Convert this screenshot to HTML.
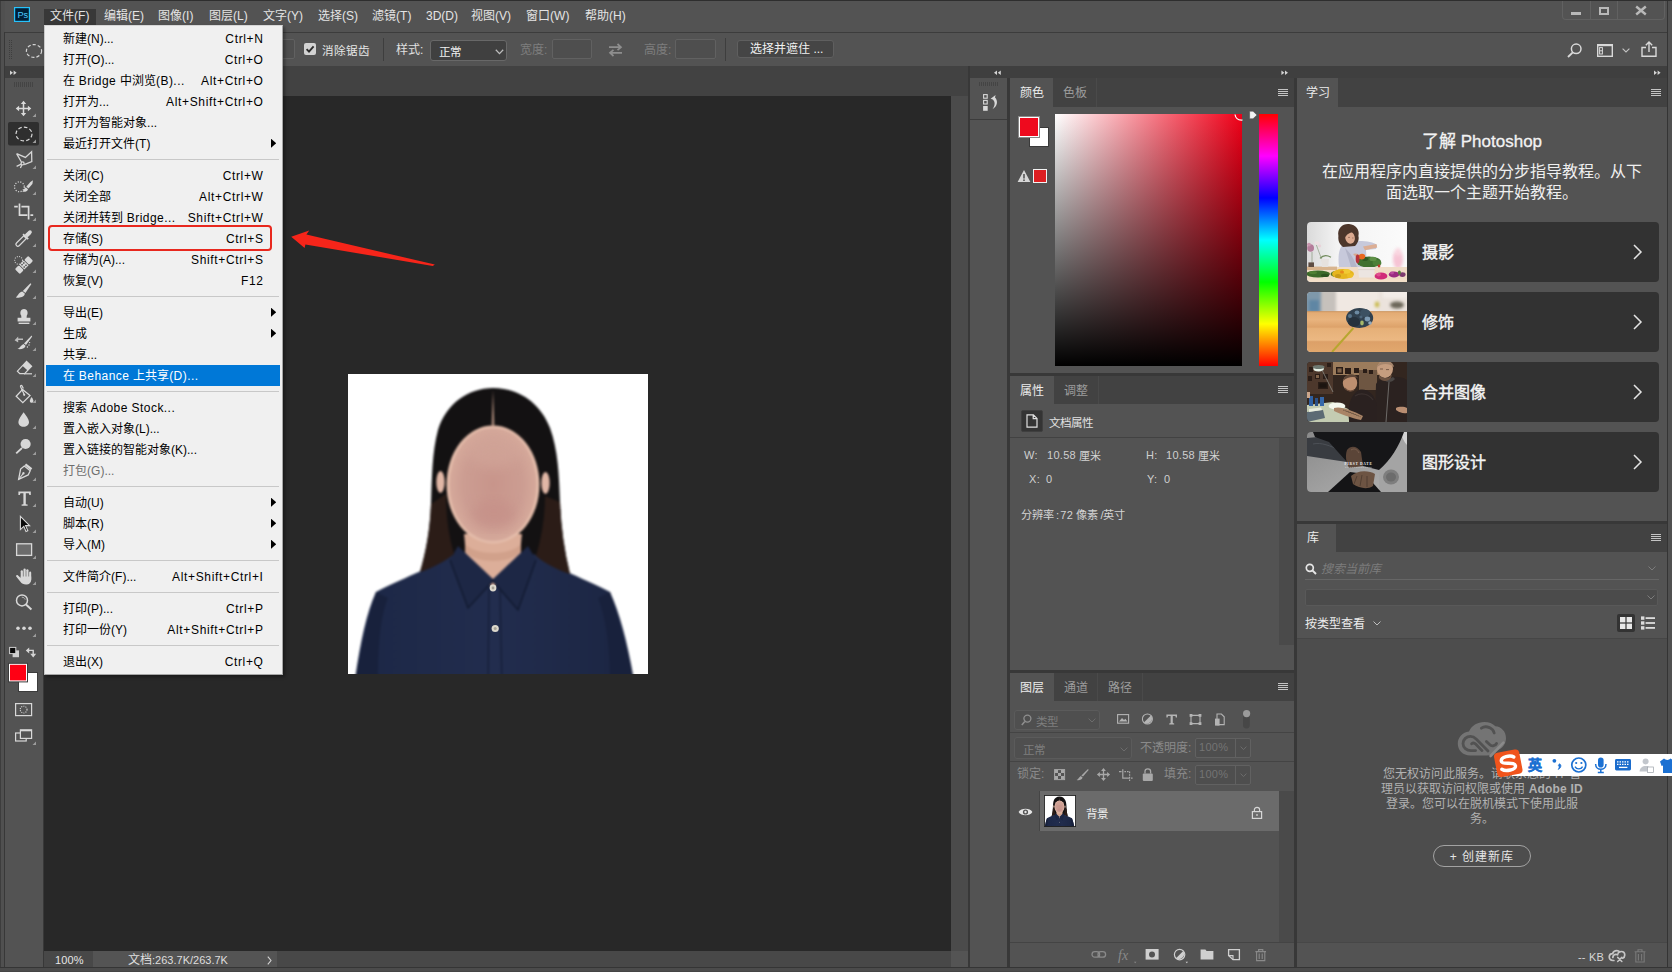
<!DOCTYPE html>
<html lang="zh-CN"><head>
<meta charset="utf-8">
<title>Photoshop</title>
<style>
*{box-sizing:border-box;margin:0;padding:0}
html,body{width:1672px;height:972px;overflow:hidden;background:#535353}
body{position:relative;font-family:"Liberation Sans",sans-serif;font-size:12px;color:#dcdcdc;-webkit-font-smoothing:antialiased}
.abs{position:absolute}
.t{position:absolute;white-space:nowrap;line-height:16px;height:16px}
svg{position:absolute;overflow:visible}
/* ---------- window frame ---------- */
#frameL{left:0;top:0;width:5px;height:972px;background:linear-gradient(#383838,#383838) no-repeat 3.4px 32px/1.6px 940px,#505050;border-left:1px solid #3d3d3d}
#frameR{left:1667px;top:0;width:5px;height:972px;background:#505050;border-left:1.2px solid #343434}
#frameT{left:0;top:0;width:1672px;height:1px;background:#2e2e2e}
#frameB{left:0;top:967px;width:1672px;height:5px;background:#4b4b4b;border-top:1px solid #353535;border-bottom:1px solid #444}
/* ---------- menubar ---------- */
#menubar{left:5px;top:1px;width:1663px;height:31px;background:#535353}
.mb{position:absolute;top:8px;height:16px;line-height:16px;color:#e4e4e4;white-space:nowrap}
#mbsel{left:44px;top:9px;width:52px;height:16px;background:#383838}
/* ---------- options bar ---------- */
#optbar{left:5px;top:32px;width:1663px;height:34px;background:#535353;border-top:1px solid #3c3c3c}
.vsep{position:absolute;width:1px;background:#3e3e3e;top:38px;height:23px}
.inbox{position:absolute;border:1px solid #616161;background:#4e4e4e;border-radius:2px}
/* ---------- collapse strip & tab strip ---------- */
#strip{left:5px;top:66px;width:1663px;height:12px;background:#3f3f3f}
#docstrip{left:44px;top:66px;width:924px;height:30px;background:#424242}
/* ---------- toolbar ---------- */
#tools{left:5px;top:78px;width:38px;height:890px;background:#535353}
#toolsR{left:43px;top:66px;width:1px;height:902px;background:#383838}
/* ---------- canvas ---------- */
#canvas{left:44px;top:96px;width:907px;height:854.5px;background:#282828}
#vscroll{left:951px;top:96px;width:17px;height:854.5px;background:#4b4b4b}
#status{left:44px;top:950.5px;width:924px;height:17.5px;background:#484848}
/* ---------- file menu ---------- */
#menu{left:44px;top:25px;width:239px;height:650px;background:#f0f0f0;border:1px solid #a6a6a6;border-top-color:#d6d6d6;border-left-color:#c9c9c9;padding:2px 2px 0 1px;color:#000;box-shadow:2px 2px 3px rgba(0,0,0,.35)}
.mi{position:relative;height:21px;line-height:23px;padding-left:17px;white-space:nowrap}
.mi .k{position:absolute;right:16.4px;top:0;letter-spacing:.66px}
.l{letter-spacing:.45px}
.mi.sub:after{content:"";position:absolute;right:3.8px;top:5.5px;width:5.4px;height:9.6px;background:#000;clip-path:polygon(0 0,100% 50%,0 100%)}
.mi.hl{background:#0078d7;color:#fff}
.mi.dis{color:#6d6d6d}
.ms{height:11px;position:relative}
.ms:after{content:"";position:absolute;left:1px;right:1px;top:5px;height:1px;background:#c8c8c8}
/* ---------- panels ---------- */
.pnl{background:#535353}
.tabbar{background:#424242}
.tab{color:#9c9c9c;text-align:center;line-height:31px;border-right:1px solid #4a4a4a;white-space:nowrap}
.tab.on{background:#535353;color:#ececec;border-right:none}
.s11{font-size:11px;color:#cfcfcf;letter-spacing:.3px}
.s11i{font-size:11px;letter-spacing:.3px}
.card{left:1307px;width:352px;height:60px;background:#323232;border-radius:4px}
.card>span{position:absolute;left:115px;top:20px;line-height:22px;font-size:16px;-webkit-text-stroke:.45px #f4f4f4;color:#f4f4f4;white-space:nowrap}
</style>
<style>.j{display:inline-block;white-space:nowrap;text-align:justify;text-align-last:justify;text-indent:0}</style></head>
<body>
<!-- window frame -->
<div class="abs" id="menubar"></div>
<div class="abs" id="optbar"></div>
<div class="abs" id="strip"></div>
<div class="abs" id="docstrip"></div>
<div class="abs" id="tools"></div>
<div class="abs" id="toolsR"></div>
<div class="abs" id="canvas"></div>
<div class="abs" id="vscroll"></div>
<div class="abs" id="status"></div>
<!--RIGHT-BEGIN-->
<!-- right dock: dividers & backgrounds -->
<div class="abs" style="left:968px;top:66px;width:700px;height:902px;background:#383838"></div>
<div class="abs" style="left:970px;top:66px;width:697px;height:12px;background:#3f3f3f"></div>
<div class="abs" style="left:970px;top:78px;width:37px;height:890px;background:#535353"></div>
<div class="abs" style="left:970px;top:119px;width:37px;height:1px;background:#3c3c3c"></div>
<div class="abs" style="left:1010px;top:66px;width:284px;height:12px;background:#3f3f3f"></div>
<div class="abs" style="left:1297px;top:66px;width:370px;height:12px;background:#3f3f3f"></div>
<svg style="left:0;top:0" width="1672" height="120" viewBox="0 0 1672 120">
<g fill="#d4d4d4"><path d="M997 70.6V75L994 72.8ZM1000.8 70.6V75L997.8 72.8Z"></path><path d="M1281.4 70.6L1284.4 72.8L1281.4 75ZM1285 70.6L1288 72.8L1285 75Z"></path><path d="M1654 70.6L1657 72.8L1654 75ZM1657.6 70.6L1660.6 72.8L1657.6 75Z"></path></g>
<path d="M979.5 82V86M981.5 82V86M983.5 82V86M985.5 82V86M987.5 82V86M989.5 82V86M991.5 82V86M993.5 82V86M995.5 82V86M997.5 82V86" stroke="#444" stroke-width="1"></path>
<!-- history icon -->
<g stroke="#d8d8d8" stroke-width="1.1" fill="none"><rect x="983.6" y="94.6" width="3.6" height="3.6"></rect><rect x="983.6" y="100.4" width="3.6" height="3.6"></rect><rect x="983.1" y="106" width="4.6" height="4.8" fill="#d8d8d8" stroke="none"></rect></g>
<path d="M990.6 98.8 L995.6 95 L995 97.6 C998.4 101 997.4 106.6 992.4 109.2 C995.2 105.6 995.4 102 992.8 99.4 Z" fill="#d8d8d8"></path>
</svg>
<!-- ===== color panel ===== -->
<div class="abs pnl" style="left:1010px;top:78px;width:284px;height:295px"></div>
<div class="abs tabbar" style="left:1010px;top:78px;width:284px;height:29px"></div>
<div class="abs tab on" style="left:1010px;top:78px;width:43px;height:29px"><span class="j" style="width: 24px;">颜色</span></div>
<div class="abs tab" style="left:1053px;top:78px;width:44px;height:29px"><span class="j" style="width: 24px;">色板</span></div>
<svg class="hb" style="left:1278px;top:89px" width="10" height="8" viewBox="0 0 10 8"><path d="M0 .5H10M0 2.5H10M0 4.5H10M0 6.5H10" stroke="#c4c4c4" stroke-width="1" shape-rendering="crispEdges"></path></svg>
<div class="abs" style="left:1029px;top:127px;width:20px;height:20px;background:#fff;border:1px solid #3a3a3a"></div>
<div class="abs" style="left:1018px;top:116px;width:22px;height:22px;background:#ee0a1e;border:1px solid #8a8a8a;box-shadow:inset 0 0 0 1px #fff"></div>
<svg style="left:1017px;top:169px" width="14" height="14" viewBox="0 0 14 14"><path d="M7 1 L13.4 13 H.6 Z" fill="#d6d6d6"></path><path d="M7 5V9.4" stroke="#535353" stroke-width="1.6"></path><circle cx="7" cy="11.2" r=".9" fill="#535353"></circle></svg>
<div class="abs" style="left:1033px;top:169px;width:14px;height:14px;background:#de1f22;border:1px solid #f2f2f2"></div>
<div class="abs" style="left:1055px;top:114px;width:187px;height:252px;background:linear-gradient(to bottom,rgba(0,0,0,0),#000),linear-gradient(to right,#fff,#f00018)"></div>
<div class="abs" style="left:1258.6px;top:114px;width:19.6px;height:252px;background:linear-gradient(to bottom,#f00 0%,#f0f 16.7%,#00f 33.3%,#0ff 50%,#0f0 66.7%,#ff0 83.3%,#f00 100%)"></div>
<svg style="left:1230px;top:108px" width="32" height="16" viewBox="0 0 32 16"><path d="M5 6.5 C5.6 10.4 8.6 12.4 12.6 12" stroke="#fff" stroke-width="1.2" fill="none"></path><path d="M19.6 3.2 H23 L27 7 L23 10.8 H19.6 Z" fill="#f2f2f2" stroke="#555" stroke-width=".6"></path></svg>
<!-- ===== properties panel ===== -->
<div class="abs pnl" style="left:1010px;top:376px;width:284px;height:294px"></div>
<div class="abs tabbar" style="left:1010px;top:376px;width:284px;height:28px"></div>
<div class="abs tab on" style="left:1010px;top:376px;width:44px;height:28px"><span class="j" style="width: 24px;">属性</span></div>
<div class="abs tab" style="left:1054px;top:376px;width:45px;height:28px"><span class="j" style="width: 24px;">调整</span></div>
<svg class="hb" style="left:1278px;top:386px" width="10" height="8" viewBox="0 0 10 8"><path d="M0 .5H10M0 2.5H10M0 4.5H10M0 6.5H10" stroke="#c4c4c4" stroke-width="1" shape-rendering="crispEdges"></path></svg>
<div class="abs" style="left:1021px;top:410px;width:22px;height:22px;background:#343434;border:1px solid #3f3f3f;border-radius:2px"></div>
<svg style="left:1026px;top:414px" width="12" height="14" viewBox="0 0 12 14"><path d="M1 .8 H7.4 L11 4.4 V13.2 H1 Z M7.2 1 V4.6 H10.8" stroke="#e0e0e0" stroke-width="1.2" fill="none"></path></svg>
<div class="t" style="left:1049px;top:415px;color:#e2e2e2;font-size:11.5px"><span class="j" style="width: 44px;">文档属性</span></div>
<div class="abs" style="left:1010px;top:437px;width:284px;height:1px;background:#424242"></div>
<div class="abs" style="left:1279px;top:438px;width:15px;height:207px;background:#4a4a4a"></div>
<div class="t s11" style="left:1024px;top:447px">W:</div><div class="t s11" style="left:1047px;top:447px">10.58</div><div class="t" style="left:1079px;top:448px;color:#d4d4d4;font-size:11px"><span class="j" style="width: 22px;">厘米</span></div>
<div class="t s11" style="left:1146px;top:447px">H:</div><div class="t s11" style="left:1166px;top:447px">10.58</div><div class="t" style="left:1198px;top:448px;color:#d4d4d4;font-size:11px"><span class="j" style="width: 22px;">厘米</span></div>
<div class="t s11" style="left:1029px;top:471px">X:</div><div class="t s11" style="left:1046px;top:471px">0</div>
<div class="t s11" style="left:1147px;top:471px">Y:</div><div class="t s11" style="left:1164px;top:471px">0</div>
<div class="t" style="left:1021px;top:507px;color:#d4d4d4;font-size:11.2px"><span class="j" style="width: 104px;">分辨率<span style="letter-spacing:-1px"> : </span><span class="s11i">72</span><span style="letter-spacing:-.5px"> </span>像素<span style="letter-spacing:-.5px"> /</span>英寸</span></div>
<!-- ===== layers panel ===== -->
<div class="abs pnl" style="left:1010px;top:673px;width:284px;height:294px"></div>
<div class="abs tabbar" style="left:1010px;top:673px;width:284px;height:28px"></div>
<div class="abs tab on" style="left:1010px;top:673px;width:44px;height:28px"><span class="j" style="width: 24px;">图层</span></div>
<div class="abs tab" style="left:1054px;top:673px;width:44px;height:28px"><span class="j" style="width: 24px;">通道</span></div>
<div class="abs tab" style="left:1098px;top:673px;width:45px;height:28px"><span class="j" style="width: 24px;">路径</span></div>
<svg class="hb" style="left:1278px;top:683px" width="10" height="8" viewBox="0 0 10 8"><path d="M0 .5H10M0 2.5H10M0 4.5H10M0 6.5H10" stroke="#c4c4c4" stroke-width="1" shape-rendering="crispEdges"></path></svg>
<!-- filter row -->
<div class="abs" style="left:1014px;top:710px;width:86px;height:20px;background:#4f4f4f;border:1px solid #5b5b5b;border-radius:3px"></div>
<svg style="left:1021px;top:714px" width="11" height="12" viewBox="0 0 11 12"><circle cx="6.4" cy="4.6" r="3.5" stroke="#8f8f8f" stroke-width="1.3" fill="none"></circle><path d="M3.8 7.4L.8 11" stroke="#8f8f8f" stroke-width="1.5"></path></svg>
<div class="t" style="left:1036px;top:714px;color:#7e7e7e;font-size:11.5px"><span class="j" style="width: 22px;">类型</span></div>
<svg style="left:1088px;top:718px" width="8" height="5" viewBox="0 0 8 5"><path d="M.6 .6L4 4L7.4 .6" stroke="#6c6c6c" stroke-width="1" fill="none"></path></svg>
<svg style="left:1110px;top:706px" width="150" height="28" viewBox="0 0 150 28" fill="none">
<rect x="7.6" y="8.6" width="11" height="8.6" stroke="#b4b4b4" stroke-width="1.1"></rect><path d="M9 15.6 L12 12 L14 14 L15.4 12.8 L17.4 15.6Z" fill="#b4b4b4"></path>
<circle cx="37.4" cy="13" r="5" stroke="#b4b4b4" stroke-width="1.1"></circle><path d="M33.9 16.5 A5 5 0 0 0 40.9 9.5Z" fill="#b4b4b4"></path>
<path d="M56.4 8.4H67V11.4H65.8L65.4 10H62.8V17L64.2 17.4V18.4H59.2V17.4L60.6 17V10H58L57.6 11.4H56.4Z" fill="#b4b4b4"></path>
<path d="M81 9.4H90V17.6H81Z" stroke="#b4b4b4" stroke-width="1.1"></path><g fill="#b4b4b4"><rect x="79.6" y="8" width="2.8" height="2.8"></rect><rect x="88.6" y="8" width="2.8" height="2.8"></rect><rect x="79.6" y="16.2" width="2.8" height="2.8"></rect><rect x="88.6" y="16.2" width="2.8" height="2.8"></rect></g>
<path d="M107 8H111.4L114.2 10.8V18.6H107Z" stroke="#b4b4b4" stroke-width="1.1"></path><path d="M105 12.6H109.6V19.6H105Z" fill="#b4b4b4"></path>
<rect x="133" y="7" width="6.8" height="15.4" rx="3.4" fill="#474747"></rect><circle cx="136.6" cy="7.6" r="3.6" fill="#9a9a9a"></circle>
</svg>
<div class="abs" style="left:1010px;top:732px;width:284px;height:1px;background:#444"></div>
<!-- blend row -->
<div class="abs" style="left:1014px;top:737px;width:118px;height:22px;background:#4f4f4f;border:1px solid #5b5b5b;border-radius:3px"></div>
<div class="t" style="left:1023px;top:742px;color:#7e7e7e;font-size:11.5px"><span class="j" style="width: 22px;">正常</span></div>
<svg style="left:1120px;top:747px" width="8" height="5" viewBox="0 0 8 5"><path d="M.6 .6L4 4L7.4 .6" stroke="#6c6c6c" stroke-width="1" fill="none"></path></svg>
<div class="t" style="left:1140px;top:740px;color:#8a8a8a"><span class="j" style="width: 51.4px;">不透明度:</span></div>
<div class="abs" style="left:1195px;top:738px;width:56px;height:20px;border:1px solid #616161;background:#4e4e4e;border-radius:2px"></div>
<div class="abs" style="left:1235px;top:739px;width:1px;height:18px;background:#616161"></div>
<div class="t s11" style="left:1199px;top:739px;color:#747474">100%</div>
<svg style="left:1240px;top:746px" width="7" height="5" viewBox="0 0 7 5"><path d="M.6 .6L3.5 3.6L6.4 .6" stroke="#6c6c6c" stroke-width="1" fill="none"></path></svg>
<div class="abs" style="left:1010px;top:761px;width:284px;height:1px;background:#444"></div>
<!-- lock row -->
<div class="t" style="left:1017px;top:766px;color:#8a8a8a"><span class="j" style="width: 27.4px;">锁定:</span></div>
<svg style="left:1050px;top:762px" width="110" height="26" viewBox="0 0 110 26" fill="none">
<rect x="4.6" y="7.6" width="10" height="10" stroke="#a8a8a8" stroke-width="1"></rect><g fill="#a8a8a8"><rect x="5" y="8" width="3" height="3"></rect><rect x="11" y="8" width="3" height="3"></rect><rect x="8" y="11" width="3" height="3"></rect><rect x="5" y="14" width="3" height="3"></rect><rect x="11" y="14" width="3" height="3"></rect></g>
<path d="M38 7 L38.6 8 L33 14.6 L31.4 13.4 Z" fill="#a8a8a8"></path><path d="M30.8 14 L32.6 15.4 C32 17.6 29.4 18.6 26.6 18 C28.6 17.2 29 15 30.8 14Z" fill="#a8a8a8"></path>
<g transform="translate(53.5 12.5)" stroke="#a8a8a8" stroke-width="1.3" fill="#a8a8a8"><path d="M-4.2 0H4.2M0 -4.2V4.2"></path><path stroke="none" d="M0 -6.6L-2.4 -3.6H2.4ZM0 6.6L-2.4 3.6H2.4ZM-6.6 0L-3.6 -2.4V2.4ZM6.6 0L3.6 -2.4V2.4Z"></path></g>
<g stroke="#a8a8a8" stroke-width="1.2"><path d="M69 9.6H71.6M72.8 7.2V16.2H79.6"></path><path d="M74.4 9.6H79.6V19M81 16.2H83.4" stroke-dasharray="1.6 1"></path></g>
<rect x="92.8" y="11.4" width="10" height="7.6" rx="1" fill="#a8a8a8"></rect><path d="M95 11.4V9.2C95 6 100.6 6 100.6 9.2V11.4" stroke="#a8a8a8" stroke-width="1.3"></path>
</svg>
<div class="t" style="left:1164px;top:766px;color:#8a8a8a"><span class="j" style="width: 27.4px;">填充:</span></div>
<div class="abs" style="left:1195px;top:765px;width:56px;height:20px;border:1px solid #616161;background:#4e4e4e;border-radius:2px"></div>
<div class="abs" style="left:1235px;top:766px;width:1px;height:18px;background:#616161"></div>
<div class="t s11" style="left:1199px;top:766px;color:#747474">100%</div>
<svg style="left:1240px;top:773px" width="7" height="5" viewBox="0 0 7 5"><path d="M.6 .6L3.5 3.6L6.4 .6" stroke="#6c6c6c" stroke-width="1" fill="none"></path></svg>
<!-- layer row -->
<div class="abs" style="left:1279px;top:791px;width:15px;height:151px;background:#4a4a4a"></div>
<div class="abs" style="left:1040px;top:791px;width:239px;height:40px;background:#6b6b6b"></div>
<div class="abs" style="left:1039px;top:791px;width:1px;height:40px;background:#454545"></div>
<svg style="left:1018px;top:806px" width="15" height="12" viewBox="0 0 15 12"><path d="M.6 6 C3 1.6 12 1.6 14.4 6 C12 10.4 3 10.4 .6 6Z" fill="#e6e6e6"></path><circle cx="7.5" cy="6" r="2.6" fill="#535353"></circle><circle cx="7.5" cy="6" r="1.2" fill="#e6e6e6"></circle></svg>
<svg style="left:1044px;top:795px;overflow:hidden" width="32" height="32" viewBox="0 0 300 300"><rect width="300" height="300" fill="#fff"></rect><use href="#portrait"></use><rect x="4" y="4" width="292" height="292" fill="none" stroke="#222" stroke-width="9"></rect></svg>
<div class="t" style="left:1086px;top:806px;color:#f0f0f0;font-size:11.5px"><span class="j" style="width: 22px;">背景</span></div>
<svg style="left:1251px;top:806px" width="12" height="13" viewBox="0 0 12 13" fill="none"><rect x="1.4" y="5.6" width="9.2" height="6.8" stroke="#d6d6d6" stroke-width="1.2"></rect><path d="M3.4 5.4V3.6C3.4 .6 8.6 .6 8.6 3.6V5.4" stroke="#d6d6d6" stroke-width="1.2"></path><path d="M6 8V10" stroke="#d6d6d6" stroke-width="1.2"></path></svg>
<!-- bottom bar -->
<div class="abs" style="left:1010px;top:942px;width:284px;height:1px;background:#444"></div>
<svg style="left:1090px;top:944px" width="190" height="22" viewBox="0 0 190 22" fill="none">
<g stroke="#8a8a8a" stroke-width="1.3"><rect x="2" y="7.6" width="7.6" height="5.6" rx="2.8"></rect><rect x="8" y="7.6" width="7.6" height="5.6" rx="2.8"></rect></g>
<text x="28" y="15.5" font-family="Liberation Serif, serif" font-style="italic" font-size="14" fill="#8a8a8a">fx</text><path d="M44 17.8L46.4 17.8L45.2 19.2Z" fill="#8a8a8a"></path>
<rect x="55.6" y="5" width="13" height="10.6" fill="#cfcfcf"></rect><circle cx="62" cy="10.4" r="3" fill="#535353"></circle>
<circle cx="89.6" cy="10.6" r="5.2" stroke="#cfcfcf" stroke-width="1.2"></circle><path d="M86 14.2 A5.2 5.2 0 0 0 93.2 7Z" fill="#cfcfcf"></path><path d="M95.6 17.8L98 17.8L96.8 19.2Z" fill="#cfcfcf"></path>
<path d="M110.6 5.4H115.4L116.6 7H123.4V15.4H110.6Z" fill="#cfcfcf"></path>
<path d="M138.6 5.6H149.4V15.6H143L138.6 11.4Z" stroke="#cfcfcf" stroke-width="1.3"></path><path d="M138.6 11.6H143V15.6" stroke="#cfcfcf" stroke-width="1.1"></path>
<g stroke="#8a8a8a" stroke-width="1.1"><path d="M165.4 7.6H176M168.6 7.4V5.6H172.8V7.4M166.6 8V16.6H174.8V8M169.2 9.6V15M172.2 9.6V15"></path></g>
</svg>
<!-- ===== learn panel ===== -->
<div class="abs pnl" style="left:1297px;top:78px;width:370px;height:443px"></div>
<div class="abs tabbar" style="left:1297px;top:78px;width:370px;height:29px"></div>
<div class="abs tab on" style="left:1297px;top:78px;width:41px;height:29px"><span class="j" style="width: 24px;">学习</span></div>
<svg class="hb" style="left:1651px;top:89px" width="10" height="8" viewBox="0 0 10 8"><path d="M0 .5H10M0 2.5H10M0 4.5H10M0 6.5H10" stroke="#c4c4c4" stroke-width="1" shape-rendering="crispEdges"></path></svg>
<div class="abs" style="left:1302px;top:130px;width:360px;height:24px;line-height:24px;text-align:center;font-size:17px;color:#f2f2f2;-webkit-text-stroke:.3px #f2f2f2;white-space:nowrap"><span class="j" style="width: 120.1px;">了解 Photoshop</span></div>
<div class="abs" style="left:1302px;top:161px;width:360px;line-height:21px;text-align:center;font-size:16px;color:#efefef;white-space:nowrap"><span class="j" style="width: 320px;">在应用程序内直接提供的分步指导教程。从下</span><br><span class="j" style="width: 192px;">面选取一个主题开始教程。</span></div>
<div class="abs card" style="top:222px"><span><span class="j" style="width: 32px;">摄影</span></span></div>
<div class="abs card" style="top:292px"><span><span class="j" style="width: 32px;">修饰</span></span></div>
<div class="abs card" style="top:362px"><span><span class="j" style="width: 64px;">合并图像</span></span></div>
<div class="abs card" style="top:432px"><span><span class="j" style="width: 64px;">图形设计</span></span></div>
<svg style="left:1633px;top:222px" width="10" height="280" viewBox="0 0 10 280" fill="none" stroke="#e4e4e4" stroke-width="1.5"><path d="M1 23L8 30L1 37M1 93L8 100L1 107M1 163L8 170L1 177M1 233L8 240L1 247"></path></svg>
<!-- thumbnails -->
<svg style="left:1307px;top:222px" width="100" height="60" viewBox="0 0 100 60">
<defs><filter id="b1" color-interpolation-filters="sRGB" x="-10%" y="-10%" width="120%" height="120%"><feGaussianBlur stdDeviation=".55"></feGaussianBlur></filter><filter id="b2" color-interpolation-filters="sRGB" x="-20%" y="-20%" width="140%" height="140%"><feGaussianBlur stdDeviation="1.6"></feGaussianBlur></filter>
<clipPath id="cL"><path d="M4 0H100V60H4Q0 60 0 56V4Q0 0 4 0Z"></path></clipPath>
<linearGradient id="g1" x1="0" x2="1"><stop offset="0" stop-color="#dadada"></stop><stop offset=".3" stop-color="#f3f3f3"></stop><stop offset="1" stop-color="#fbfbfb"></stop></linearGradient></defs>
<g clip-path="url(#cL)"><rect width="100" height="60" fill="url(#g1)"></rect>
<g filter="url(#b2)"><ellipse cx="91" cy="37" rx="5" ry="10" fill="#f6c4d4"></ellipse><ellipse cx="91" cy="30" rx="3" ry="4" fill="#f9d6e0"></ellipse></g>
<g filter="url(#b1)">
<rect x="0" y="45" width="100" height="15" fill="#f0dcc6"></rect><rect x="0" y="44.6" width="30" height="3.4" fill="#d8b48e"></rect><rect x="0" y="57" width="100" height="3" fill="#f3dfc8"></rect>
<path d="M32 45 C30.6 34 32 24 38 21 L52 19 C60 19 67 20.4 70 23 L69 27 L59 28 L60 45 Z" fill="#c7c9db"></path><path d="M38 26 C42 30 46 34 50 45 H44 C42 38 40 32 38 26Z" fill="#b3b5c9"></path>
<path d="M56 24.4 L69.4 22 L70.2 25.6 L58 28.2 Z" fill="#dcae94"></path><path d="M46 32 C50 30 54 34 56 38 L52 40 C50 36 48 34 46 32Z" fill="#d8a88e"></path>
<path d="M31.4 14 C30 6 36 1.4 42 2 C49 2.4 53 8 51.4 14 C52.6 18 50 22 48 24 L36 25 C32 22 31 18 31.4 14Z" fill="#4c362b"></path>
<ellipse cx="43" cy="15.6" rx="4.8" ry="6.2" fill="#dcaa90" transform="rotate(-14 43 15.6)"></ellipse><path d="M36.6 11 C40 6 47 6 50 11 C46 9.4 41 10.4 38.4 15Z" fill="#4c362b"></path><path d="M41 15.4h2M45 16h1.6" stroke="#7a5444" stroke-width=".6"></path>
<ellipse cx="3.6" cy="26" rx="3.4" ry="3.8" fill="#b47c9a"></ellipse><ellipse cx="2" cy="22.6" rx="2" ry="1.8" fill="#c896ae"></ellipse><path d="M5 30V42M9.4 23 C12 30 14 36 16 40" stroke="#8a9a80" stroke-width=".7" fill="none"></path><rect x="1.4" y="40.4" width="5.6" height="4.6" fill="#5e4d43"></rect><ellipse cx="10" cy="21" rx="2.6" ry="1.8" fill="#eddfe2"></ellipse><ellipse cx="12.6" cy="24" rx="1.6" ry="1.4" fill="#e9d3d9"></ellipse>
<path d="M14 37H22L21 45H15Z" fill="#e6e2de"></path><path d="M13 36.4 C16 33 20 33 24 35.2" stroke="#6f8a5a" stroke-width="1.3" fill="none"></path>
<ellipse cx="62" cy="40" rx="12" ry="5.6" fill="#3f7030"></ellipse><ellipse cx="70" cy="41" rx="4.4" ry="3" fill="#4c8038"></ellipse><ellipse cx="58" cy="37" rx="3" ry="2" fill="#2f5a24"></ellipse><ellipse cx="55" cy="34.6" rx="3.2" ry="2.8" fill="#e8681f"></ellipse><ellipse cx="50.6" cy="37" rx="1.9" ry="4.4" fill="#b5323a"></ellipse><ellipse cx="66" cy="37" rx="3.6" ry="2.2" fill="#5e9046"></ellipse><circle cx="72" cy="44" r="1.4" fill="#c0392b"></circle>
<path d="M51 45H68L67 55.4H52Z" fill="#ece5e1"></path><path d="M51 47.6H68" stroke="#d8cec8" stroke-width=".7"></path>
<ellipse cx="11" cy="52" rx="12" ry="3.4" fill="#3c6a2a"></ellipse><ellipse cx="6" cy="50.6" rx="4" ry="1.6" fill="#4e8034"></ellipse><ellipse cx="18" cy="53.4" rx="4" ry="1.6" fill="#2c5220"></ellipse><ellipse cx="28.6" cy="52" rx="5" ry="3" fill="#4f7a2c"></ellipse>
<ellipse cx="36" cy="52" rx="11" ry="5" fill="#e6b51f"></ellipse><ellipse cx="39.6" cy="49.4" rx="3.8" ry="2.4" fill="#f2ca34"></ellipse><ellipse cx="31" cy="54" rx="3" ry="2" fill="#c99a18"></ellipse><ellipse cx="43" cy="53.4" rx="3" ry="2.4" fill="#eebf26"></ellipse><ellipse cx="35" cy="50" rx="2" ry="1.6" fill="#e88a1c"></ellipse>
<ellipse cx="74" cy="54" rx="6.4" ry="3.6" fill="#d12b79"></ellipse><ellipse cx="71.6" cy="52.6" rx="2.4" ry="1.8" fill="#e0508f"></ellipse><ellipse cx="87" cy="52.4" rx="5.2" ry="3" fill="#9b2b82"></ellipse><ellipse cx="95.4" cy="52.6" rx="3.2" ry="2.4" fill="#7d3a6e"></ellipse><ellipse cx="92.4" cy="50.6" rx="1.5" ry="2.2" fill="#56803c"></ellipse><ellipse cx="85" cy="51" rx="2" ry="1.4" fill="#b84a9c"></ellipse>
</g></g></svg>
<svg style="left:1307px;top:292px" width="100" height="60" viewBox="0 0 100 60">
<defs><linearGradient id="g2" x1="0" x2="0" y1="0" y2="1"><stop offset="0" stop-color="#e2aa72"></stop><stop offset=".2" stop-color="#e9b47e"></stop><stop offset=".38" stop-color="#dda26a"></stop><stop offset=".42" stop-color="#e6b078"></stop><stop offset=".7" stop-color="#ebb882"></stop><stop offset=".74" stop-color="#dca068"></stop><stop offset="1" stop-color="#e2a86e"></stop></linearGradient></defs>
<g clip-path="url(#cL)"><rect width="100" height="60" fill="#ebe3dc"></rect>
<g filter="url(#b2)"><rect x="-3" y="-3" width="17" height="24" fill="#7f98aa"></rect><rect x="2" y="8" width="10" height="12" fill="#5f86a4"></rect><rect x="14" y="-3" width="15" height="24" fill="#c6c1bc"></rect><rect x="29" y="-3" width="42" height="24" fill="#f0e8e2"></rect><ellipse cx="70" cy="12.6" rx="2.2" ry="3" fill="#c9b94a"></ellipse><ellipse cx="90" cy="13" rx="7" ry="3.4" fill="#6b6658"></ellipse><rect x="76" y="-2" width="30" height="8" fill="#f3ede8"></rect></g>
<rect x="0" y="19.4" width="100" height="41" fill="url(#g2)"></rect><rect x="0" y="19" width="100" height="1.2" fill="#c9935e" opacity=".7"></rect>
<g filter="url(#b1)"><path d="M46.4 36 L25 60" stroke="#b7a62f" stroke-width="1.9"></path><ellipse cx="52.6" cy="26" rx="13.6" ry="10" fill="#31414f"></ellipse><ellipse cx="47" cy="30" rx="6" ry="5" fill="#26323d"></ellipse><ellipse cx="58" cy="21" rx="5" ry="4" fill="#3c5162"></ellipse><ellipse cx="60.4" cy="27" rx="2.8" ry="2.4" fill="#7d9bb3"></ellipse><ellipse cx="50" cy="20.6" rx="2.4" ry="2" fill="#6c8aa2"></ellipse><ellipse cx="55" cy="31" rx="1.8" ry="2.4" fill="#a7b86a"></ellipse><ellipse cx="43" cy="24" rx="2" ry="2" fill="#587389"></ellipse><ellipse cx="63" cy="31" rx="1.8" ry="1.8" fill="#91a9bd"></ellipse><ellipse cx="54" cy="25" rx="1.6" ry="1.4" fill="#4d667a"></ellipse></g>
</g></svg>
<svg style="left:1307px;top:362px" width="100" height="60" viewBox="0 0 100 60">
<g clip-path="url(#cL)"><rect width="100" height="60" fill="#33261f"></rect>
<g filter="url(#b1)">
<rect x="24" y="0" width="50" height="13" fill="#9c7c5c"></rect><rect x="0" y="0" width="26" height="32" fill="#4d382c"></rect><rect x="52" y="8" width="18" height="20" fill="#6e5642"></rect>
<g fill="#2a1d17"><rect x="2" y="5" width="4" height="5"></rect><rect x="8" y="12" width="5" height="5"></rect><rect x="16" y="12" width="5" height="5"></rect><rect x="11" y="20" width="10" height="7"></rect><rect x="29" y="5" width="7" height="7"></rect><rect x="38" y="6" width="6" height="6"></rect><rect x="47" y="6" width="5" height="5"></rect><rect x="20" y="1" width="4" height="4"></rect><rect x="1" y="14" width="4" height="5"></rect><rect x="56" y="7" width="4" height="4"></rect><rect x="62" y="8" width="4" height="4"></rect></g>
<g fill="#80634a"><rect x="30.4" y="6.4" width="4.2" height="4.2"></rect><rect x="12.4" y="21.4" width="7.2" height="4.2" fill="#1c1410"></rect><rect x="9" y="13" width="3" height="3"></rect></g>
<ellipse cx="11.6" cy="6.8" rx="5.2" ry="2.6" fill="#e8f2e8"></ellipse><ellipse cx="11.6" cy="5" rx="6" ry="2" fill="#6f7a72"></ellipse><path d="M15 8 L26 30" stroke="#8a8a84" stroke-width=".8"></path>
<path d="M0 43 L26 40 L52 52 L46 60 H0Z" fill="#c4ccb2"></path><ellipse cx="30" cy="44" rx="8.4" ry="3.6" fill="#f4f8ee"></ellipse><path d="M0 50 L16 48 L18 56 L0 60Z" fill="#5c6a74"></path><path d="M2 47 L14 45.4 L15 48 L2 50Z" fill="#e8ecdf"></path>
<rect x="2" y="34" width="4" height="10" fill="#2f60a2"></rect><rect x="8" y="36" width="3" height="8" fill="#2a5088"></rect><rect x="13" y="35" width="4" height="9" fill="#3668aa"></rect><rect x="0" y="30" width="3" height="6" fill="#caa58a"></rect>
<path d="M68 60 L69 22 C72 15 92 12 100 18 V60Z" fill="#2b2220"></path><path d="M82 20 L79 60" stroke="#8a8a86" stroke-width=".7"></path><path d="M76 17 C79 21 85 21 88 17 L86 15 C83 17 80 17 78 15Z" fill="#4a4644"></path>
<ellipse cx="78" cy="7" rx="8" ry="9" fill="#c59d7f"></ellipse><path d="M72 12 C74 17 82 18 85 12 L84 16 C81 20 75 20 72 16Z" fill="#6c5241"></path><path d="M70 5 C72 -3 86 -3 87 5 C82 1 75 1 70 5Z" fill="#a7866c"></path><path d="M73 7h3M79 7.6h3" stroke="#5a4030" stroke-width=".7"></path>
<path d="M42 58 C40 44 44 32 52 28 C60 26 68 32 70 44 L70 60 H42Z" fill="#2a2120"></path><path d="M48 34 C54 30 62 32 66 38" stroke="#3a302e" stroke-width="1.2" fill="none"></path>
<ellipse cx="43" cy="21" rx="7.2" ry="8" fill="#bd8f70"></ellipse><path d="M36 19 C37 11 48 10 51 16 C46 14 40 15 36 19Z" fill="#5e4738"></path><path d="M38 26 C40 29 44 30 47 28" stroke="#6a4c3a" stroke-width="1.2" fill="none"></path>
<path d="M27 46 C34 44 44 48 56 54 L54 58 C44 56 34 52 27 49Z" fill="#a98466"></path><path d="M36 48 C42 50 48 52 54 55" stroke="#5e4a3c" stroke-width=".7" stroke-dasharray="1 .8"></path>
<path d="M89 46 C93 44 98 45 100 46 V51 C96 52 92 50 89 48Z" fill="#b98e72"></path>
</g></g></svg>
<svg style="left:1307px;top:432px" width="100" height="60" viewBox="0 0 100 60">
<defs><linearGradient id="g4" x1="0" x2="1" y1="0" y2="1"><stop offset="0" stop-color="#8a8a8a"></stop><stop offset="1" stop-color="#b2b2b2"></stop></linearGradient></defs>
<g clip-path="url(#cL)"><rect width="100" height="60" fill="url(#g4)"></rect>
<g filter="url(#b1)">
<rect x="72" y="0" width="28" height="60" fill="#a4a4a4"></rect><path d="M93 0H100V13 C97 10 95 5 93 0Z" fill="#d4d4d4"></path>
<path d="M0 6 L22 4 L46 14 L40 30 L0 24Z" fill="#393c41"></path><path d="M6 12 C14 10 24 14 32 18" stroke="#4c5056" stroke-width="1" fill="none"></path>
<path d="M6 0 H97 C92 14 84 28 72 38 L40 30 L22 10 L8 5Z" fill="#161618"></path>
<ellipse cx="84" cy="45" rx="8" ry="7.6" fill="#7e7e7e"></ellipse><ellipse cx="84" cy="45" rx="5" ry="4.6" fill="#6c6c6c"></ellipse>
<path d="M40 18 C44 13 50 14 54 20 L56 34 L42 36 C39 30 38 24 40 18Z" fill="#5b4538"></path><path d="M44 18 C47 16 50 17 52 21" stroke="#7a6050" stroke-width="1" fill="none"></path>
<path d="M21 60 L43 40 L58 42 L74 60Z" fill="#141416"></path>
<path d="M44 44 C50 38 62 38 68 42 L66 54 C60 58 52 56 46 52Z" fill="#6d5443"></path><path d="M50 44L47 52M55 43L53 54M60 44L60 55" stroke="#4a382d" stroke-width=".8"></path>
</g>
<text x="51.5" y="32.6" text-anchor="middle" font-family="Liberation Serif, serif" font-weight="bold" font-size="3.6" letter-spacing=".7" fill="#f2f2f2">FIRST DATE</text><path d="M38 35.4H65" stroke="#cfcfcf" stroke-width=".5" stroke-dasharray="1.6 .6"></path>
</g></svg>
<!-- ===== library panel ===== -->
<div class="abs pnl" style="left:1297px;top:524px;width:370px;height:443px"></div>
<div class="abs tabbar" style="left:1297px;top:523.5px;width:370px;height:28px"></div>
<div class="abs tab on" style="left:1297px;top:523.5px;width:39px;height:28px;text-align:left;padding-left:10px;line-height:29px">库</div>
<svg class="hb" style="left:1651px;top:534px" width="10" height="8" viewBox="0 0 10 8"><path d="M0 .5H10M0 2.5H10M0 4.5H10M0 6.5H10" stroke="#c4c4c4" stroke-width="1" shape-rendering="crispEdges"></path></svg>
<svg style="left:1305px;top:563px" width="12" height="12" viewBox="0 0 12 12"><circle cx="4.8" cy="4.8" r="3.5" stroke="#e6e6e6" stroke-width="1.7" fill="none"></circle><path d="M7.4 7.4L11 11" stroke="#e6e6e6" stroke-width="2"></path></svg>
<div class="t" style="left:1321px;top:561px;color:#7c7c7c;font-style:italic"><span class="j" style="width: 60px;">搜索当前库</span></div>
<svg style="left:1648px;top:566px" width="8" height="5" viewBox="0 0 8 5"><path d="M.5 .5L4 4L7.5 .5" stroke="#7c7c7c" stroke-width="1" fill="none"></path></svg>
<div class="abs" style="left:1305px;top:579px;width:354px;height:1px;background:#666"></div>
<div class="abs" style="left:1305px;top:589px;width:353px;height:17px;background:#4b4b4b;border:1px solid #595959;border-radius:2px"></div>
<svg style="left:1647px;top:595px" width="8" height="5" viewBox="0 0 8 5"><path d="M.5 .5L4 4L7.5 .5" stroke="#7c7c7c" stroke-width="1" fill="none"></path></svg>
<div class="t" style="left:1305px;top:616px;color:#ececec"><span class="j" style="width: 60px;">按类型查看</span></div>
<svg style="left:1373px;top:621px" width="8" height="5" viewBox="0 0 8 5"><path d="M.5 .5L4 4L7.5 .5" stroke="#bdbdbd" stroke-width="1" fill="none"></path></svg>
<div class="abs" style="left:1617px;top:614px;width:18px;height:18px;background:#333;border-radius:2px"></div>
<svg style="left:1620px;top:617px" width="12" height="12" viewBox="0 0 12 12" fill="#e8e8e8"><rect width="5.4" height="5.4"></rect><rect x="6.6" width="5.4" height="5.4"></rect><rect y="6.6" width="5.4" height="5.4"></rect><rect x="6.6" y="6.6" width="5.4" height="5.4"></rect></svg>
<svg style="left:1641px;top:616px" width="14" height="14" viewBox="0 0 14 14" fill="#dcdcdc"><rect y=".4" width="3.4" height="3.4"></rect><rect x="4.6" y="1.2" width="9.4" height="1.8"></rect><rect y="5.3" width="3.4" height="3.4"></rect><rect x="4.6" y="6.1" width="9.4" height="1.8"></rect><rect y="10.2" width="3.4" height="3.4"></rect><rect x="4.6" y="11" width="9.4" height="1.8"></rect></svg>
<div class="abs" style="left:1297px;top:638px;width:370px;height:304px;background:#4d4d4d;border-top:1px solid #464646"></div>
<!-- CC cloud -->
<svg style="left:1456px;top:720px" width="54" height="40" viewBox="0 0 54 40">
<path d="M14.4 35.6 C6.6 35.6 1.8 30 1.8 23.8 C1.8 17.4 6.6 12.2 13 11.6 C15.4 5.6 21.4 2 28.4 2 C33 2 36.6 3.6 39.4 6.2 C45.4 6.6 50 11.6 50 18 C50 24 46.4 28.6 41.4 30.4 C38.6 33.6 35 35.6 30.6 35.6 Z" fill="#747474"></path>
<g fill="none" stroke="#525252" stroke-width="2.8" stroke-linecap="round"><path d="M19.6 30.6 H15 C10.6 30.6 7 27.6 7 23.6 C7 19.2 10.6 16.4 14.4 16.4 C17 16.4 18.6 17.4 20.4 19.2 L32 31"></path><path d="M15.6 23.8 C17 22.6 18.6 23 19.6 24 L26 30.6"></path><path d="M25.4 8.2 C27.4 6.8 30.6 6.4 33.4 7.6 C36 8.8 37.6 10.8 38.2 13"></path><path d="M30.4 21.4 L33.6 24.6 C36 27 39.6 25.6 40.6 23.4"></path></g>
<path d="M47.4 22.6 L34.6 36" stroke="#8a8a8a" stroke-width="2.6" stroke-linecap="round"></path>
</svg>
<div class="abs" style="left:1362px;top:767px;width:240px;line-height:15px;text-align:center;color:#b2b2b2;white-space:nowrap"><span class="j" style="width: 197.2px;">您无权访问此服务。请联系您的 IT 管</span><br><span class="j" style="width: 201.9px;">理员以获取访问权限或使用<span style="font-weight:bold;letter-spacing:.2px"> Adobe ID</span></span><br><span class="j" style="width: 192px;">登录。您可以在脱机模式下使用此服</span><br><span class="j" style="width: 24px;">务。</span></div>
<div class="abs" style="left:1433px;top:845px;width:98px;height:22px;border:1px solid #a2a2a2;border-radius:11px;line-height:22px;text-align:center;color:#e6e6e6;letter-spacing:1px;white-space:nowrap"><span class="j" style="width: 64.4px;">+ 创建新库</span></div>
<div class="abs" style="left:1297px;top:942px;width:370px;height:1px;background:#474747"></div>
<div class="t" style="left:1578px;top:949px;color:#d6d6d6;font-size:11px;letter-spacing:.2px">-- KB</div>
<svg style="left:1608px;top:949px" width="18" height="14" viewBox="0 0 52 40" fill="none" stroke="#c6c6c6" stroke-width="5" stroke-linecap="round"><path d="M17 33 H14 C7 33 3.6 28 3.6 23 C3.6 17 8 13 13.6 13 C15 7.6 20 4.4 25.6 4.4 C29 4.4 32 5.8 34 8"></path><path d="M29 12 C31 8.6 34.6 7 38 7 C44.6 7 48.4 12 48.4 17 C48.4 22 45 25.4 42.4 26.4"></path><path d="M14 24 C14 18 19 15 23 15 C25 15 26.6 15.6 28 16.6"></path><path d="M28 24L40 36M40 24L28 36" stroke-width="4.4"></path></svg>
<svg style="left:1634px;top:949px" width="12" height="14" viewBox="0 0 12 14" fill="none" stroke="#7a7a7a" stroke-width="1.1"><path d="M.6 2.8H11.4M4 2.6V.8H8V2.6M1.8 3.2V13H10.2V3.2M4.4 5V11.4M7.6 5V11.4"></path></svg>
<!--RIGHT-END-->
<!-- menubar -->
<div class="abs" id="mbsel"></div>
<svg style="left:14px;top:7px" width="16" height="15" viewBox="0 0 16 15"><rect x="0.6" y="0.6" width="14.8" height="13.8" fill="#001e36" stroke="#27c2fb" stroke-width="1.2"></rect><text x="3.4" y="11.2" font-family="Liberation Sans, sans-serif" font-size="9.2" fill="#4cc9ff">Ps</text></svg>
<div class="mb" style="left:50px"><span class="j" style="width: 39.4px;">文件(F)</span></div>
<div class="mb" style="left:104px"><span class="j" style="width: 40px;">编辑(E)</span></div>
<div class="mb" style="left:158px"><span class="j" style="width: 35.4px;">图像(I)</span></div>
<div class="mb" style="left:209px"><span class="j" style="width: 38.7px;">图层(L)</span></div>
<div class="mb" style="left:263px"><span class="j" style="width: 40px;">文字(Y)</span></div>
<div class="mb" style="left:318px"><span class="j" style="width: 40px;">选择(S)</span></div>
<div class="mb" style="left:372px"><span class="j" style="width: 39.4px;">滤镜(T)</span></div>
<div class="mb" style="left:426px">3D(D)</div>
<div class="mb" style="left:471px"><span class="j" style="width: 40px;">视图(V)</span></div>
<div class="mb" style="left:526px"><span class="j" style="width: 43.4px;">窗口(W)</span></div>
<div class="mb" style="left:585px"><span class="j" style="width: 40.7px;">帮助(H)</span></div>
<!-- window controls -->
<div class="abs" style="left:1562px;top:0;width:103px;height:20px;border:1px solid #616161;border-top:none;border-radius:0 0 4px 4px"></div>
<div class="abs" style="left:1590px;top:1px;width:1px;height:18px;background:#616161"></div>
<div class="abs" style="left:1617px;top:1px;width:1px;height:18px;background:#616161"></div>
<div class="abs" style="left:1571px;top:12px;width:10px;height:3px;background:#b9b9b9"></div>
<div class="abs" style="left:1599px;top:7px;width:10px;height:8px;border:2px solid #b9b9b9"></div>
<svg style="left:1635px;top:6px" width="12" height="9" viewBox="0 0 12 9"><path d="M1.2 0.5 L10.8 8.5 M10.8 0.5 L1.2 8.5" stroke="#b9b9b9" stroke-width="2.4" fill="none"></path></svg>

<!-- options bar -->
<svg style="left:9px;top:40px" width="3" height="20" viewBox="0 0 3 20"><path d="M0.5 0V20M2.5 0V20" stroke="#3e3e3e" stroke-width="1" stroke-dasharray="1 1"></path></svg>
<svg style="left:25px;top:43px" width="18" height="16" viewBox="0 0 18 16"><ellipse cx="9" cy="8" rx="7.6" ry="6.4" fill="none" stroke="#d6d6d6" stroke-width="1.2" stroke-dasharray="3.2 2"></ellipse></svg>
<div class="inbox" style="left:256px;top:39px;width:39px;height:20px"></div>
<div class="abs" style="left:304px;top:43px;width:12px;height:12px;background:#d2d2d2;border-radius:2px"></div>
<svg style="left:304px;top:43px" width="12" height="12" viewBox="0 0 12 12"><path d="M2.6 6.2 L5 8.6 L9.6 3.4" stroke="#2b2b2b" stroke-width="1.9" fill="none"></path></svg>
<div class="t" style="left:321.5px;top:42.5px;color:#e6e6e6;font-size:11.6px"><span class="j" style="width: 48px;">消除锯齿</span></div>
<div class="vsep" style="left:383px"></div>
<div class="t" style="left:396px;top:42px;color:#e0e0e0"><span class="j" style="width: 27.4px;">样式:</span></div>
<div class="abs" style="left:430px;top:40px;width:77px;height:21px;background:#404040;border:1px solid #686868;border-radius:3px"></div>
<div class="t" style="left:439px;top:43.5px;color:#f0f0f0;font-size:11.5px"><span class="j" style="width: 22px;">正常</span></div>
<svg style="left:495px;top:49px" width="9" height="6" viewBox="0 0 9 6"><path d="M0.8 0.8 L4.5 4.6 L8.2 0.8" stroke="#bdbdbd" stroke-width="1.3" fill="none"></path></svg>
<div class="t" style="left:520px;top:42px;color:#7e7e7e"><span class="j" style="width: 27.4px;">宽度:</span></div>
<div class="inbox" style="left:552px;top:39px;width:40px;height:20px"></div>
<svg style="left:608px;top:43px" width="15" height="14" viewBox="0 0 15 14"><path d="M1 4.2H12.5M9.5 1L13 4.2L9.5 7.2M14 9.8H2.5M5.5 6.8L2 9.8L5.5 13" stroke="#8e8e8e" stroke-width="1.7" fill="none"></path></svg>
<div class="t" style="left:644px;top:42px;color:#7e7e7e"><span class="j" style="width: 27.4px;">高度:</span></div>
<div class="inbox" style="left:675px;top:39px;width:41px;height:20px"></div>
<div class="vsep" style="left:725px"></div>
<div class="abs" style="left:737px;top:40px;width:97px;height:18px;background:#454545;border:1px solid #5f5f5f;border-radius:3px"></div>
<div class="t" style="left:750px;top:41px;color:#f2f2f2"><span class="j" style="width: 73.4px;">选择并遮住 ...</span></div>
<!-- options bar right icons -->
<svg style="left:1567px;top:43px" width="16" height="15" viewBox="0 0 16 15"><circle cx="9.2" cy="5.8" r="4.8" fill="none" stroke="#d9d9d9" stroke-width="1.5"></circle><path d="M5.8 9.4 L1 14" stroke="#d9d9d9" stroke-width="1.9"></path></svg>
<svg style="left:1597px;top:44px" width="16" height="13" viewBox="0 0 16 13"><rect x="0.7" y="0.7" width="14.6" height="11.6" fill="none" stroke="#d9d9d9" stroke-width="1.4"></rect><path d="M0.7 1.6H15.3" stroke="#d9d9d9" stroke-width="1.2"></path><rect x="2.6" y="3.6" width="2.8" height="6.4" fill="none" stroke="#d9d9d9" stroke-width="1"></rect><path d="M2.6 6.8H5.4" stroke="#d9d9d9" stroke-width="1"></path></svg>
<svg style="left:1622px;top:48px" width="8" height="5" viewBox="0 0 8 5"><path d="M0.6 0.6 L4 4 L7.4 0.6" stroke="#c4c4c4" stroke-width="1.1" fill="none"></path></svg>
<svg style="left:1641px;top:41px" width="16" height="16" viewBox="0 0 16 16"><path d="M5 6.5H1V15.2H15V6.5H11" fill="none" stroke="#d9d9d9" stroke-width="1.4"></path><path d="M8 11V1.2M4.8 4.2L8 1L11.2 4.2" fill="none" stroke="#d9d9d9" stroke-width="1.4"></path></svg>

<!--TOOLS-BEGIN-->
<!-- toolbar -->
<svg style="left:0;top:0" width="60" height="972" viewBox="0 0 60 972" fill="none" stroke-linecap="butt">
<g fill="#d4d4d4" stroke="none"><path d="M10 70.6 L13 72.8 L10 75 Z M13.6 70.6 L16.6 72.8 L13.6 75 Z"></path></g>
<path d="M14.5 82V87M16.5 82V87M18.5 82V87M20.5 82V87M22.5 82V87M24.5 82V87M26.5 82V87M28.5 82V87M30.5 82V87M32.5 82V87" stroke="#444" stroke-width="1"></path>
<rect x="8" y="122" width="31" height="23.5" rx="2" fill="#2f2f2f"></rect>
<!-- flyout corner triangles -->
<g fill="#9c9c9c">
<path d="M36 113.5V117H32.5Z"></path><path d="M36 139.5V143H32.5Z"></path><path d="M36 165.5V169H32.5Z"></path><path d="M36 191.5V195H32.5Z"></path><path d="M36 217.5V221H32.5Z"></path><path d="M36 243.5V247H32.5Z"></path><path d="M36 269.5V273H32.5Z"></path><path d="M36 295.5V299H32.5Z"></path><path d="M36 321.5V325H32.5Z"></path><path d="M36 347.5V351H32.5Z"></path><path d="M36 373.5V377H32.5Z"></path><path d="M36 399.5V403H32.5Z"></path><path d="M36 425.5V429H32.5Z"></path><path d="M36 451.5V455H32.5Z"></path><path d="M36 477.5V481H32.5Z"></path><path d="M36 503.5V507H32.5Z"></path><path d="M36 529.5V533H32.5Z"></path><path d="M36 555.5V559H32.5Z"></path><path d="M36 581.5V585H32.5Z"></path><path d="M36 633.5V637H32.5Z"></path><path d="M36 741.5V745H32.5Z"></path>
</g>
<!-- 1 move -->
<g transform="translate(23.5 108.5)" stroke="#dadada" stroke-width="1.5" fill="#dadada"><path d="M-5 0H5M0 -5V5"></path><path stroke="none" d="M0 -7.8L-2.7 -4.4H2.7ZM0 7.8L-2.7 4.4H2.7ZM-7.8 0L-4.4 -2.7V2.7ZM7.8 0L4.4 -2.7V2.7Z"></path></g>
<!-- 2 ellipse marquee -->
<ellipse cx="24" cy="134" rx="8" ry="6.9" stroke="#dcdcdc" stroke-width="1.15" stroke-dasharray="3.6 2.2"></ellipse>
<!-- 3 poly lasso -->
<g stroke="#d6d6d6" stroke-width="1.3"><path d="M16.6 153.6 L25.4 157.4 L31.6 151.8 L31.8 161.6 L24.2 164.6 M16.6 153.6 L21.4 162"></path><circle cx="22.6" cy="163.4" r="1.5"></circle><path d="M21.2 164.2L16.6 166.4M21.8 165L20.4 168"></path></g>
<!-- 4 quick select -->
<g><circle cx="19.4" cy="186.8" r="4.9" stroke="#d6d6d6" stroke-width="1.3" stroke-dasharray="1.1 1.5"></circle><path d="M33 180.2 L32.4 184 L28.4 188.4 L26.4 186.6 L30.4 182 Z" fill="#d8d8d8"></path><path d="M25.8 187.2 L28 189.2 C27.4 191.6 24.6 192.2 22.2 191.6 C23.8 190.6 24 188.4 25.8 187.2Z" fill="#d8d8d8"></path></g>
<!-- 5 crop -->
<g stroke="#dadada" stroke-width="1.7"><path d="M14.2 206.7H17.8M19.5 203.4V215.2H27.4"></path><path d="M21.4 206.7H28.6V219.4M30.4 215.2H33.2"></path></g>
<!-- 6 eyedropper -->
<g transform="translate(24 238.2) rotate(45)"><path d="M-1.9 -1.5 H1.9 V8.4 Q1.9 10.6 0 10.6 Q-1.9 10.6 -1.9 8.4 Z" stroke="#d6d6d6" stroke-width="1.2"></path><path d="M-3.6 -3.2H3.6V-1.4H-3.6Z M-2 -3.2 V-7.6 Q-2 -10.4 0 -10.4 Q2 -10.4 2 -7.6 V-3.2Z" fill="#d8d8d8"></path></g>
<!-- 7 healing brush -->
<g><circle cx="18.6" cy="260.4" r="3.9" stroke="#cfcfcf" stroke-width="1.1" stroke-dasharray="1 1.3"></circle><g transform="translate(24 265) rotate(-45)"><rect x="-9.4" y="-3.5" width="5.6" height="7" rx="1.2" fill="#d8d8d8"></rect><rect x="3.8" y="-3.5" width="5.6" height="7" rx="1.2" fill="#d8d8d8"></rect><rect x="-3" y="-3.5" width="6" height="7" fill="#d8d8d8"></rect><g fill="#4e4e4e"><rect x="-2" y="-2.3" width="1.5" height="1.5"></rect><rect x="0.5" y="-2.3" width="1.5" height="1.5"></rect><rect x="-2" y="0.8" width="1.5" height="1.5"></rect><rect x="0.5" y="0.8" width="1.5" height="1.5"></rect></g></g></g>
<!-- 8 brush -->
<g fill="#d8d8d8"><path d="M30.4 283.2 L31.4 284 L25.4 293 L22.8 291 Z"></path><path d="M22.2 291.6 L24.8 293.6 C24.8 297 20 298.4 15.8 297.4 C18 296.4 18.2 292.6 22.2 291.6Z"></path></g>
<!-- 9 stamp -->
<g fill="#d8d8d8"><path d="M21.2 315.6 C19.6 313.6 20.2 309 24 309 C27.8 309 28.4 313.6 26.8 315.6 L26.6 317.8 H30.4 V321.4 H17.6 V317.8 H21.4 Z"></path><rect x="18.6" y="322.6" width="10.8" height="1.4"></rect></g>
<!-- 10 history brush -->
<g fill="#d8d8d8"><path d="M31.6 335.4 L32.2 336.6 L26 345 L24 343.4 Z"></path><path d="M23.4 344 L25.6 345.8 C25 348.4 21.8 349.6 17.4 349 C20.2 348 20.8 345.2 23.4 344Z"></path><path d="M14.6 340.2 L18.2 336.6 V338.6 H23 V340 H18.2 V342.4 Z" fill="#bdbdbd"></path><circle cx="29.6" cy="342.6" r=".7"></circle><circle cx="29" cy="345" r=".7"></circle><circle cx="27.4" cy="347" r=".7"></circle></g>
<!-- 11 eraser -->
<g><path d="M26.6 361.4 L31.6 366.2 L24.6 373.6 H19.8 L17.4 371.2 Z" stroke="#d8d8d8" stroke-width="1.2"></path><path d="M26.6 361.4 L31.6 366.2 L27.6 370.4 L22.4 365.8 Z" fill="#d8d8d8"></path><path d="M24 373.8H32" stroke="#d8d8d8" stroke-width="1.2"></path></g>
<!-- 12 paint bucket -->
<g><path d="M22.6 389.4 L30 395.6 L22.8 402.6 L16.2 396.2 Z" stroke="#d8d8d8" stroke-width="1.3"></path><path d="M24.2 394.6 L20.6 386.8 C20 385.4 21.6 385 22.2 386.2 L23.4 388.6" stroke="#d8d8d8" stroke-width="1.2"></path><circle cx="24.2" cy="394.8" r="1.1" fill="#d8d8d8"></circle><path d="M31.6 397 C32.8 399 33.4 400.2 33.4 401 C33.4 402.2 32.6 402.8 31.6 402.8 C30.6 402.8 29.8 402.2 29.8 401 C29.8 400.2 30.4 399 31.6 397Z" fill="#d8d8d8"></path></g>
<!-- 13 blur drop -->
<path d="M23.6 412.2 C26 415.6 29 418.8 29 422 C29 425 26.6 426.8 23.6 426.8 C20.6 426.8 18.4 425 18.4 422 C18.4 418.8 21.4 415.6 23.6 412.2Z" fill="#d8d8d8"></path>
<!-- 14 dodge -->
<g><circle cx="25.6" cy="444" r="5.1" fill="#d8d8d8"></circle><path d="M22 448 L16.2 453.4" stroke="#d8d8d8" stroke-width="1.8"></path></g>
<!-- 15 pen -->
<g transform="translate(24.4 472) rotate(38)"><path d="M-3.8 -4.6 H3.8 L4.8 0 L0 9.4 L-4.8 0 Z" stroke="#d8d8d8" stroke-width="1.3"></path><path d="M-3.9 -7.8 H3.9 V-5.4 H-3.9Z" fill="#d8d8d8"></path><path d="M0 9 V2.4" stroke="#d8d8d8" stroke-width="1"></path><circle cx="0" cy="1.6" r="1.2" fill="#d8d8d8"></circle></g>
<!-- 16 type -->
<path d="M18.4 491.4 H30.8 V495 H29.4 L28.8 493.2 H25.8 V504.2 L27.6 504.6 V505.8 H21.6 V504.6 L23.4 504.2 V493.2 H20.4 L19.8 495 H18.4 Z" fill="#d8d8d8"></path>
<!-- 17 path select -->
<path d="M20.4 516.4 L29.6 525.6 H25.6 L27.8 530.6 L26 531.4 L23.8 526.4 L20.4 529.6 Z" fill="#0a0a0a" stroke="#d8d8d8" stroke-width="1.1"></path>
<!-- 18 rectangle -->
<rect x="16.6" y="543.8" width="15" height="11.6" fill="#6c6c6c" stroke="#d8d8d8" stroke-width="1.3"></rect>
<!-- 19 hand -->
<g fill="#d8d8d8"><rect x="20.7" y="570.2" width="2.2" height="9" rx="1.1"></rect><rect x="23.5" y="568.4" width="2.2" height="10" rx="1.1"></rect><rect x="26.3" y="569.2" width="2.2" height="10" rx="1.1"></rect><rect x="29.1" y="571.6" width="2.1" height="9" rx="1.05"></rect><path d="M20.7 576.6 H31.2 V579.4 C31.2 582.6 29 584.6 26 584.6 C23.4 584.6 21.8 583.8 20.2 581.6 L16.2 576.4 C15.6 575.4 16.8 574.4 17.8 575.2 L20.7 578 Z"></path></g>
<!-- 20 zoom -->
<g><circle cx="22" cy="600.4" r="5.5" stroke="#d8d8d8" stroke-width="1.5"></circle><path d="M26 604.6 L31.4 609.6" stroke="#d8d8d8" stroke-width="2"></path><path d="M21.8 597.2 C23.6 597.2 24.8 598.2 25.2 599.6" stroke="#bdbdbd" stroke-width=".9"></path></g>
<!-- 21 dots -->
<g fill="#d8d8d8"><circle cx="18" cy="628.2" r="1.8"></circle><circle cx="24" cy="628.2" r="1.8"></circle><circle cx="30" cy="628.2" r="1.8"></circle></g>
<!-- default colors / swap -->
<rect x="12.6" y="650.4" width="6.4" height="6.8" fill="#d0d0d0"></rect><rect x="9.6" y="647.4" width="6.2" height="6.2" fill="#0a0a0a" stroke="#d0d0d0" stroke-width="1"></rect>
<g stroke="#d4d4d4" stroke-width="1.4" fill="#d4d4d4"><path d="M28.6 650.4 H33.2 V654.6" fill="none"></path><path stroke="none" d="M25.8 650.4 L29.2 647.4 V653.4Z M33.2 657.4 L30.2 653.8 H36.2Z"></path></g>
<!-- fg/bg -->
<rect x="18.5" y="672.5" width="19" height="19" fill="#fff" stroke="#3c3c3c" stroke-width="1"></rect>
<rect x="8.5" y="663.3" width="19" height="18.6" fill="#fff" stroke="#3c3c3c" stroke-width="1"></rect>
<rect x="10" y="664.8" width="16" height="15.6" fill="#ff0014"></rect>
<!-- quick mask -->
<rect x="15.6" y="703.6" width="16" height="12" stroke="#d8d8d8" stroke-width="1.2"></rect><circle cx="23.6" cy="709.6" r="3.4" stroke="#d8d8d8" stroke-width="1.1" stroke-dasharray="1 1.2"></circle>
<!-- screen mode -->
<rect x="15.6" y="733" width="10.6" height="8" stroke="#d8d8d8" stroke-width="1.2"></rect><rect x="20.4" y="729.8" width="11.2" height="8.6" fill="#535353" stroke="#d8d8d8" stroke-width="1.2"></rect><path d="M20.4 730.6H31.6" stroke="#d8d8d8" stroke-width="1.4"></path>
</svg>
<!--TOOLS-END-->
<!--CANVAS-BEGIN-->
<!-- canvas photo -->
<svg style="left:348px;top:374px;overflow:hidden" width="300" height="300" viewBox="0 0 300 300">
<defs>
<filter id="pb" color-interpolation-filters="sRGB" x="-5%" y="-5%" width="110%" height="110%"><feGaussianBlur stdDeviation="1.1"></feGaussianBlur></filter>
<filter id="pb2" color-interpolation-filters="sRGB" x="-20%" y="-20%" width="140%" height="140%"><feGaussianBlur stdDeviation="6"></feGaussianBlur></filter>
<radialGradient id="fg" cx=".5" cy=".5" r=".62"><stop offset="0" stop-color="#c8958b"></stop><stop offset=".55" stop-color="#cc9d92"></stop><stop offset=".85" stop-color="#d7ab9c"></stop><stop offset="1" stop-color="#e3bba9"></stop></radialGradient>
<linearGradient id="hg" x1="0" x2="0" y1="0" y2="1"><stop offset="0" stop-color="#0f0e0f"></stop><stop offset=".55" stop-color="#1a1514"></stop><stop offset="1" stop-color="#3a251d"></stop></linearGradient>
<linearGradient id="sg" x1="0" x2="1"><stop offset="0" stop-color="#1c2746"></stop><stop offset=".5" stop-color="#222d4e"></stop><stop offset="1" stop-color="#1b2542"></stop></linearGradient>
<g id="portrait">
<g filter="url(#pb)">
<!-- hair -->
<path d="M145 14 C120 14 98 30 90 56 C84 78 84 104 83 130 C82 156 78 178 72 198 C90 192 104 186 112 192 L180 192 C188 186 204 194 222 200 C216 176 213 152 212 128 C211 100 210 76 202 54 C192 28 170 14 145 14Z" fill="#131112"></path>
<!-- ears -->
<ellipse cx="92.5" cy="108" rx="4.2" ry="11" fill="#e1b7a6"></ellipse><ellipse cx="197.5" cy="109" rx="4.2" ry="11" fill="#e1b7a6"></ellipse>
<!-- neck -->
<path d="M116 160 C118 176 118 186 112 196 L145 222 L178 196 C172 186 172 176 174 160Z" fill="#dcae99"></path>
<path d="M117 170 C128 182 162 182 173 170 L173 178 C160 190 130 190 117 178Z" fill="#c9977f" opacity=".55"></path>
<!-- shirt -->
<path d="M6 312 C12 270 18 240 28 218 C50 206 84 194 104 180 L145 214 L186 180 C206 194 240 206 262 218 C272 240 280 270 287 312Z" fill="url(#sg)"></path>
<path d="M28 218 C20 244 14 272 6 312 H30 C30 272 32 244 40 224Z" fill="#18213c"></path><path d="M262 218 C270 244 278 272 287 312 H262 C262 272 258 244 250 224Z" fill="#18213c"></path>
<!-- collar -->
<path d="M110 172 L102 186 L120 234 L146 206 Z" fill="#1d2745"></path><path d="M180 172 L188 186 L170 236 L144 206 Z" fill="#1d2745"></path>
<path d="M102 186 L120 234 L146 206" stroke="#121a30" stroke-width="1.4" fill="none"></path><path d="M188 186 L170 236 L144 206" stroke="#121a30" stroke-width="1.4" fill="none"></path>
<path d="M141 214 L140 312 M152 214 L154 312" stroke="#151d36" stroke-width="1.2" fill="none"></path>
<!-- hair strands over shoulders -->
<path d="M83 130 C82 156 78 178 72 198 C84 194 96 188 106 180 C100 160 98 140 98 120Z" fill="#2b1c17"></path><path d="M212 128 C213 152 216 176 222 200 C210 196 198 190 188 182 C194 162 197 142 197 122Z" fill="#2b1c17"></path>
<!-- face -->
<ellipse cx="145" cy="110.5" rx="46.5" ry="59" fill="#e4bcaa"></ellipse>
<ellipse cx="145" cy="110.5" rx="43.5" ry="56.5" fill="url(#fg)"></ellipse>
<path d="M145 16 L143.6 52 H146.4Z" fill="#a98878"></path>
</g>
<ellipse cx="146" cy="140" rx="22" ry="14" fill="#c48d86" opacity=".6" filter="url(#pb2)"></ellipse>
<ellipse cx="146" cy="78" rx="26" ry="16" fill="#d3a79a" opacity=".55" filter="url(#pb2)"></ellipse>
<circle cx="145" cy="214" r="3.4" fill="#dcd8cc"></circle><circle cx="145" cy="214" r="1.4" fill="#a7a296"></circle>
<circle cx="147.2" cy="254.5" r="3.6" fill="#dcd8cc"></circle><circle cx="147.2" cy="254.5" r="1.5" fill="#a7a296"></circle>
</g>
</defs>
<rect width="300" height="300" fill="#fff"></rect>
<use href="#portrait"></use>
</svg>
<!-- status bar -->
<div class="abs" style="left:951px;top:950.5px;width:17px;height:17.5px;background:#545454"></div>
<div class="abs" style="left:93px;top:950.5px;width:184px;height:17.5px;background:#545454"></div>
<div class="t" style="left:55px;top:952px;font-size:11px;color:#e6e6e6;letter-spacing:.1px">100%</div>
<div class="t" style="left:128px;top:952px;font-size:11px;color:#dedede"><span class="j" style="width: 99.9px;"><span style="font-size:12px">文档</span>:263.7K/263.7K</span></div>
<svg style="left:267px;top:955.5px" width="5" height="9" viewBox="0 0 5 9"><path d="M.8 .6L4 4.5L.8 8.4" stroke="#d4d4d4" stroke-width="1.1" fill="none"></path></svg>
<!--CANVAS-END-->
<!-- file menu -->
<div class="abs" id="menu">
<div class="mi"><span class="j" style="width: 50.7px;">新建(N)...</span><span class="k">Ctrl+N</span></div>
<div class="mi"><span class="j" style="width: 51.4px;">打开(O)...</span><span class="k">Ctrl+O</span></div>
<div class="mi"><span class="j" style="width: 121.7px;">在<span class="l"> Bridge </span>中浏览<span class="l">(B)...</span></span><span class="k">Alt+Ctrl+O</span></div>
<div class="mi"><span class="j" style="width: 46.1px;">打开为...</span><span class="k">Alt+Shift+Ctrl+O</span></div>
<div class="mi"><span class="j" style="width: 94.1px;">打开为智能对象...</span></div>
<div class="mi sub"><span class="j" style="width: 87.4px;">最近打开文件(T)</span></div>
<div class="ms"></div>
<div class="mi"><span class="j" style="width: 40.7px;">关闭(C)</span><span class="k">Ctrl+W</span></div>
<div class="mi"><span class="j" style="width: 48px;">关闭全部</span><span class="k">Alt+Ctrl+W</span></div>
<div class="mi"><span class="j" style="width: 112.6px;">关闭并转到<span class="l"> Bridge...</span></span><span class="k">Shift+Ctrl+W</span></div>
<div class="mi"><span class="j" style="width: 40px;">存储(S)</span><span class="k">Ctrl+S</span></div>
<div class="mi"><span class="j" style="width: 62px;">存储为(A)...</span><span class="k">Shift+Ctrl+S</span></div>
<div class="mi"><span class="j" style="width: 40px;">恢复(V)</span><span class="k">F12</span></div>
<div class="ms"></div>
<div class="mi sub"><span class="j" style="width: 40px;">导出(E)</span></div>
<div class="mi sub"><span class="j" style="width: 24px;">生成</span></div>
<div class="mi"><span class="j" style="width: 34.1px;">共享...</span></div>
<div class="mi hl"><span class="j" style="width: 135.5px;">在<span class="l"> Behance </span>上共享<span class="l">(D)...</span></span></div>
<div class="ms"></div>
<div class="mi"><span class="j" style="width: 112.2px;">搜索<span class="l"> Adobe Stock...</span></span></div>
<div class="mi"><span class="j" style="width: 96.7px;">置入嵌入对象(L)...</span></div>
<div class="mi"><span class="j" style="width: 134px;">置入链接的智能对象(K)...</span></div>
<div class="mi dis"><span class="j" style="width: 51.4px;">打包(G)...</span></div>
<div class="ms"></div>
<div class="mi sub"><span class="j" style="width: 40.7px;">自动(U)</span></div>
<div class="mi sub"><span class="j" style="width: 40.7px;">脚本(R)</span></div>
<div class="mi sub"><span class="j" style="width: 42px;">导入(M)</span></div>
<div class="ms"></div>
<div class="mi"><span class="j" style="width: 73.4px;">文件简介(F)...</span><span class="k">Alt+Shift+Ctrl+I</span></div>
<div class="ms"></div>
<div class="mi"><span class="j" style="width: 50px;">打印(P)...</span><span class="k">Ctrl+P</span></div>
<div class="mi"><span class="j" style="width: 64px;">打印一份(Y)</span><span class="k">Alt+Shift+Ctrl+P</span></div>
<div class="ms"></div>
<div class="mi"><span class="j" style="width: 40px;">退出(X)</span><span class="k">Ctrl+Q</span></div>
</div>
<!-- red annotation -->
<div class="abs" style="left:48px;top:225px;width:224px;height:26px;border:2px solid #e8281e;border-radius:4px"></div>
<svg style="left:0;top:0" width="1672" height="972" viewBox="0 0 1672 972"><path d="M291.2 236.8 L309.2 230.6 L306.4 234.4 L434.8 264.6 L432.8 266 L305.4 244.4 L304.6 248 Z" fill="#f6251a"></path></svg>

<div class="abs" id="frameL"></div>
<div class="abs" id="frameR"></div>
<div class="abs" id="frameT"></div>
<div class="abs" id="frameB"></div>
<!-- ===== Sogou IME bar ===== -->
<div class="abs" style="left:1512px;top:754px;width:160px;height:22px;background:#fff"></div>
<svg style="left:1492px;top:748px" width="180" height="30" viewBox="0 0 180 30">
<g transform="rotate(-11 16 15)"><rect x="3.4" y="3" width="25.6" height="24.6" rx="4" fill="#f0541c"></rect><path d="M22.8 10.2 C20 7.4 9.8 7.4 9.8 12 C9.8 16.4 22.8 14 22.8 19 C22.8 23.4 12 23.2 8.8 20" stroke="#fff" stroke-width="3.4" fill="none" stroke-linecap="round"></path></g>
<text x="35.8" y="22.2" font-family="Liberation Sans, sans-serif" font-weight="bold" font-size="14" fill="#1b70d2" stroke="#1b70d2" stroke-width=".5">英</text>
<circle cx="62.4" cy="12.8" r="1.9" fill="#1b70d2"></circle><path d="M67.4 15.8 C69.6 16.6 69.4 20 66.2 21.4 C67.6 19.8 67.4 18.4 66.4 17.6Z" fill="#1b70d2" stroke="#1b70d2" stroke-width=".8"></path>
<circle cx="86.8" cy="17" r="7" stroke="#1b70d2" stroke-width="1.7" fill="none"></circle><circle cx="84.2" cy="15" r="1.1" fill="#1b70d2"></circle><circle cx="89.4" cy="15" r="1.1" fill="#1b70d2"></circle><path d="M83 18.6 C84.6 21.6 89 21.6 90.6 18.6" stroke="#1b70d2" stroke-width="1.4" fill="none"></path>
<rect x="106" y="9.6" width="5.6" height="10" rx="2.8" fill="#1b70d2"></rect><path d="M103.6 16 C103.6 23 114 23 114 16M108.8 21.4V24.6M105.8 24.6H111.8" stroke="#1b70d2" stroke-width="1.5" fill="none"></path>
<rect x="123" y="11" width="16" height="11.4" rx="1.4" fill="#1b6ccc"></rect><path d="M125 13.8H137.4M125 16.4H137.4" stroke="#fff" stroke-width="1.3" stroke-dasharray="1.5 1"></path><path d="M127 19.4H135.4" stroke="#fff" stroke-width="1.3"></path>
<circle cx="153.6" cy="13.4" r="3" fill="#c2c6cc"></circle><path d="M147.6 23.6 C147.6 16 159.6 16 159.6 23.6Z" fill="#c2c6cc"></path><rect x="155.4" y="19" width="6" height="5.6" fill="#fff" stroke="#9aa0a8" stroke-width=".7"></rect>
<path d="M168 13.4 L172 10.6 C173.6 12.4 177 12.4 178.6 10.6 L180 11.6 V25 H171 V17.4 L169.6 18Z" fill="#1b70d2"></path>
</svg>


</body></html>
